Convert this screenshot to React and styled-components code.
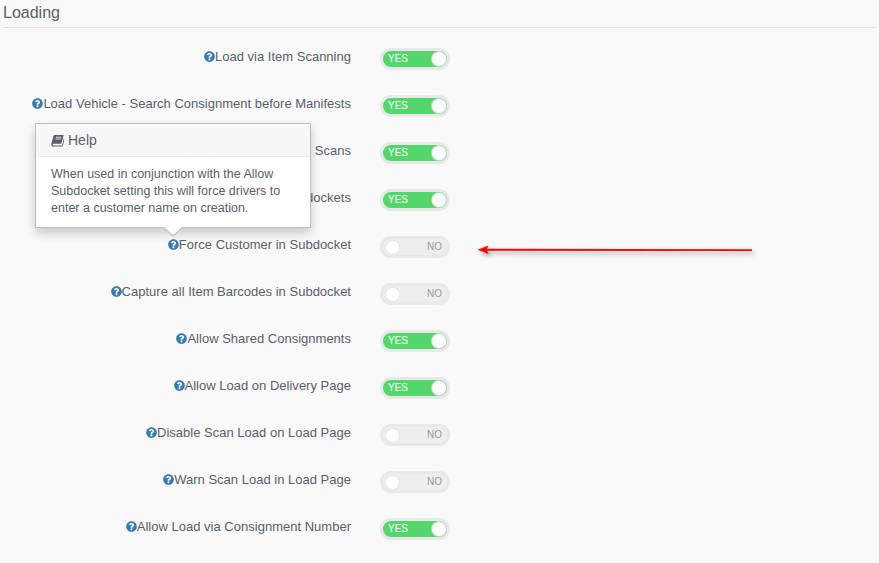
import React from "react";
import styled, { createGlobalStyle } from "styled-components";
import { FaQuestionCircle } from "react-icons/fa";

const Global = createGlobalStyle`
	html, body {
		margin: 0;
		background: #f9f9f9;
		overflow: hidden;
	}
	body {
		font-family: "Liberation Sans", Arial, sans-serif;
		color: #5a6068;
	}
`;

const Page = styled.div`
	position: relative;
	width: 879px;
	height: 563px;
	padding: 0 3px;
	box-sizing: border-box;
`;

const Title = styled.h4`
	margin: 0 0 20px;
	padding: 3px 0 5px;
	height: 28px;
	box-sizing: border-box;
	border-bottom: 1px solid #e0e0e0;
	font-size: 16px;
	line-height: 19px;
	font-weight: 400;
	color: #5a6068;
`;

const Rows = styled.div`
	display: flex;
	flex-direction: column;
	gap: 25px;
`;

const Row = styled.div`
	display: flex;
	align-items: center;
	height: 22px;
`;

const Label = styled.label`
	width: 348px;
	display: flex;
	justify-content: flex-end;
	align-items: center;
	margin-top: -5px;
	font-size: 13px;
	letter-spacing: 0.01px;
	line-height: 16px;
	color: #5a6068;
`;

const HelpIcon = styled(FaQuestionCircle)`
	width: 11px;
	height: 11px;
	color: #337ab7;
`;

const Toggle = styled.div`
	margin-left: 29px;
	width: 70px;
	height: 22px;
	box-sizing: border-box;
	border-radius: 11px;
	border: 3px solid #e8e8e8;
	background: ${(p) => (p.$on ? "#53d76a" : "#eeeeee")};
	display: flex;
	align-items: center;
	justify-content: space-between;
	flex-direction: ${(p) => (p.$on ? "row" : "row-reverse")};
	padding: ${(p) => (p.$on ? "0 1px 1px 5px" : "0 5px 1px 3px")};
	font-size: 10px;
	color: ${(p) => (p.$on ? "#ffffff" : "#999999")};
`;

const Knob = styled.span`
	width: ${(p) => (p.$on ? "14px" : "13px")};
	height: ${(p) => (p.$on ? "14px" : "13px")};
	margin-bottom: -1px;
	border-radius: 50%;
	background: #ffffff;
	box-shadow: 0 0 0 1px rgba(225, 225, 225, 0.7);
`;

const Popover = styled.div`
	position: absolute;
	left: 35px;
	top: 123px;
	width: 276px;
	height: 105px;
	box-sizing: border-box;
	background: #ffffff;
	border: 1px solid #bdbdbd;
	box-shadow: 0 5px 10px rgba(0, 0, 0, 0.2);
`;

const PopoverHead = styled.div`
	display: flex;
	align-items: center;
	gap: 4px;
	height: 33px;
	box-sizing: border-box;
	padding: 0 15px;
	background: #f7f7f7;
	border-bottom: 1px solid #ebebeb;
	border-radius: 4px 4px 0 0;
	font-size: 14px;
	color: #5a6068;
`;

const PopoverBody = styled.div`
	padding: 9px 15px;
	font-size: 12.5px;
	line-height: 17px;
	color: #5a6068;
`;

const Caret = styled.span`
	position: absolute;
	left: 126px;
	bottom: -10px;
	width: 0;
	height: 0;
	border-left: 11px solid transparent;
	border-right: 11px solid transparent;
	border-top: 10px solid #c4c4c4;

	&::after {
		content: "";
		position: absolute;
		left: -10px;
		top: -11px;
		width: 0;
		height: 0;
		border-left: 10px solid transparent;
		border-right: 10px solid transparent;
		border-top: 9.500px solid #ffffff;
	}
`;

const Arrow = styled.svg`
	position: absolute;
	left: 470px;
	top: 238px;
	filter: drop-shadow(2px 3px 2px rgba(0, 0, 0, 0.35));
`;

const settings = [
	["Load via Item Scanning", true],
	["Load Vehicle - Search Consignment before Manifests", true],
	["Allow Item Scans", true],
	["Allow Subdockets", true],
	["Force Customer in Subdocket", false],
	["Capture all Item Barcodes in Subdocket", false],
	["Allow Shared Consignments", true],
	["Allow Load on Delivery Page", true],
	["Disable Scan Load on Load Page", false],
	["Warn Scan Load in Load Page", false],
	["Allow Load via Consignment Number", true],
];

function BookIcon() {
	return (
		<svg width="13" height="13" viewBox="0 0 13 13">
			<path
				d="M3.500 1H12.700l-2.400 8.800H2.600c-.7 0-1 .4-.9.9.1.500.5.8 1.100.8h8.400l1.700-7.500.7.600-1.900 8H2.400C1.100 12.600.2 11.500.3 10.200c0-.6.2-1.200.4-1.800L2.500 2C2.700 1.400 3 1 3.500 1z"
				fill="#5a6068"
			/>
			<path d="M5 3.200h5.300M4.500 5h5.300" stroke="#f7f7f7" strokeWidth="0.8" />
		</svg>
	);
}

function App() {
	return (
		<Page>
			<Global />
			<Title>Loading</Title>
			<Rows>
				{settings.map(([name, on]) => (
					<Row key={name}>
						<Label>
							<HelpIcon />
							{name}
						</Label>
						<Toggle $on={on}>
							{on ? "YES" : "NO"}
							<Knob $on={on} />
						</Toggle>
					</Row>
				))}
			</Rows>

			<Popover>
				<PopoverHead>
					<BookIcon />
					Help
				</PopoverHead>
				<PopoverBody>
					When used in conjunction with the Allow Subdocket setting this will force drivers to enter a customer name on creation.
				</PopoverBody>
				<Caret />
			</Popover>

			<Arrow width="290" height="24" viewBox="0 0 290 24">
				<path d="M7.500 11.700 L18.500 7.500 L17 10.800 L282 11.300 L282 13 L17 12.700 L18.500 16z" fill="#ff0000" />
			</Arrow>
		</Page>
	);
}

export default App;
